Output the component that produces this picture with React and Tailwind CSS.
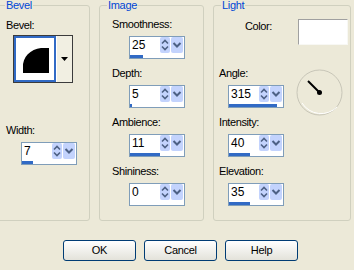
import React from 'react';

const font = { fontFamily: '"Liberation Sans", Arial, sans-serif' };

function SpinBox({ value, bar }) {
  return (
    <div className="w-[56px] h-[23px] border border-[#7F9DB9] bg-white flex flex-col">
      <div className="h-[16px] flex items-center">
        <span className="flex-1 pl-[2px] text-[12px] leading-[16px] text-black">{value}</span>
        <div className="w-[10px] h-[16px] bg-[#C3D3FD] rounded-[2px] mr-[1px]">
          <svg width="10" height="16" viewBox="0 0 10 16">
            <path d="M2 6.5 L5 3.5 L8 6.5" fill="none" stroke="#4D6185" strokeWidth="1.6" />
            <path d="M2 9.5 L5 12.5 L8 9.5" fill="none" stroke="#4D6185" strokeWidth="1.6" />
          </svg>
        </div>
        <div className="w-[12px] h-[16px] bg-[#C3D3FD] rounded-[2px] mr-[1px]">
          <svg width="12" height="16" viewBox="0 0 12 16">
            <path d="M2.5 6 L6 9.5 L9.5 6" fill="none" stroke="#4D6185" strokeWidth="2" />
          </svg>
        </div>
      </div>
      <div className="mt-[2px] h-[3px] bg-white">
        <div className="h-[3px] bg-[#316AC5]" style={{ width: bar }} />
      </div>
    </div>
  );
}

function Label({ children, className = '' }) {
  return (
    <div className={`text-[11px] leading-[13px] tracking-[-0.4px] text-black ${className}`}>{children}</div>
  );
}

function Group({ title, className, children }) {
  return (
    <fieldset className={`border border-[#D0D0BF] rounded-[3px] h-[221px] ${className}`}>
      <legend className="ml-[7px] px-[1px] text-[11px] leading-[11px] tracking-[-0.3px] text-[#0046D5]">{title}</legend>
      {children}
    </fieldset>
  );
}

function Button({ children }) {
  return (
    <button className="w-[73px] h-[21px] border border-[#003C74] rounded-[3px] bg-gradient-to-b from-white to-[#E3E2DA] text-[11px] text-black tracking-[-0.3px]">
      {children}
    </button>
  );
}

export default function App() {
  return (
    <div className="w-[354px] h-[270px] bg-[#ECE9D8] overflow-hidden" style={font}>
      <div className="flex">
        <Group title="Bevel" className="w-[93px] -ml-[3px]">
          <div className="pl-[8px] pt-[8px]">
            <Label>Bevel:</Label>
          </div>
          <div className="mt-[3px] ml-[15px] w-[60px] h-[48px] flex border border-[#3b3b3b]">
            <div className="w-[42px] h-full border-2 border-[#316AC5] bg-white">
              <svg width="38" height="44" viewBox="0 0 38 44">
                <path d="M7 35 L7 29 A20 18 0 0 1 25 10 L33 10 L33 35 Z" fill="#000" />
              </svg>
            </div>
            <div className="flex-1 bg-[#F1EFE2] border-l border-[#ffffff] flex items-center justify-center">
              <svg width="7" height="4" viewBox="0 0 7 4">
                <path d="M0 0 L7 0 L3.5 4 Z" fill="#000" />
              </svg>
            </div>
          </div>
          <div className="pl-[8px] mt-[41px]">
            <Label>Width:</Label>
          </div>
          <div className="mt-[5px] ml-[23px]">
            <SpinBox value="7" bar={11} />
          </div>
        </Group>

        <Group title="Image" className="w-[105px] ml-[9px]">
          <div className="pl-[12px] pt-[7px]">
            <Label>Smoothness:</Label>
            <div className="mt-[5px] ml-[17px]"><SpinBox value="25" bar={13} /></div>
            <Label className="mt-[8px]">Depth:</Label>
            <div className="mt-[5px] ml-[17px]"><SpinBox value="5" bar={2} /></div>
            <Label className="mt-[8px]">Ambience:</Label>
            <div className="mt-[5px] ml-[17px]"><SpinBox value="11" bar={30} /></div>
            <Label className="mt-[8px]">Shininess:</Label>
            <div className="mt-[5px] ml-[17px]"><SpinBox value="0" bar={0} /></div>
          </div>
        </Group>

        <Group title="Light" className="w-[138px] ml-[9px]">
          <div className="flex justify-between mt-[8px]">
            <Label className="ml-[31px] mt-[1px]">Color:</Label>
            <div className="w-[50px] h-[26px] mr-[2px] bg-white border border-t-[#A0A0A0] border-l-[#A0A0A0] border-r-[#F8F8F4] border-b-[#F8F8F4]" />
          </div>
          <div className="flex items-start mt-[22px] pl-[5px]">
            <div>
              <Label>Angle:</Label>
              <div className="mt-[5px] ml-[9px]"><SpinBox value="315" bar={48} /></div>
            </div>
            <svg className="ml-[12px] mt-[2px] -mb-[9px]" width="48" height="48" viewBox="0 0 48 48">
              <circle cx="23.5" cy="23.5" r="22.5" fill="none" stroke="#C8C6B8" strokeWidth="1" />
              <path d="M6 34 A22.5 22.5 0 0 0 41 38" fill="none" stroke="#FFFFFF" strokeWidth="1" />
              <line x1="12" y1="12" x2="23.5" y2="23.5" stroke="#000" strokeWidth="2" />
              <circle cx="23.5" cy="23.5" r="2.5" fill="#000" />
            </svg>
          </div>
          <div className="pl-[5px]">
            <Label className="mt-[8px]">Intensity:</Label>
            <div className="mt-[5px] ml-[9px]"><SpinBox value="40" bar={21} /></div>
            <Label className="mt-[8px]">Elevation:</Label>
            <div className="mt-[5px] ml-[9px]"><SpinBox value="35" bar={21} /></div>
          </div>
        </Group>
      </div>

      <div className="flex gap-[8px] ml-[63px] mt-[19px]">
        <Button>OK</Button>
        <Button>Cancel</Button>
        <Button>Help</Button>
      </div>
    </div>
  );
}
